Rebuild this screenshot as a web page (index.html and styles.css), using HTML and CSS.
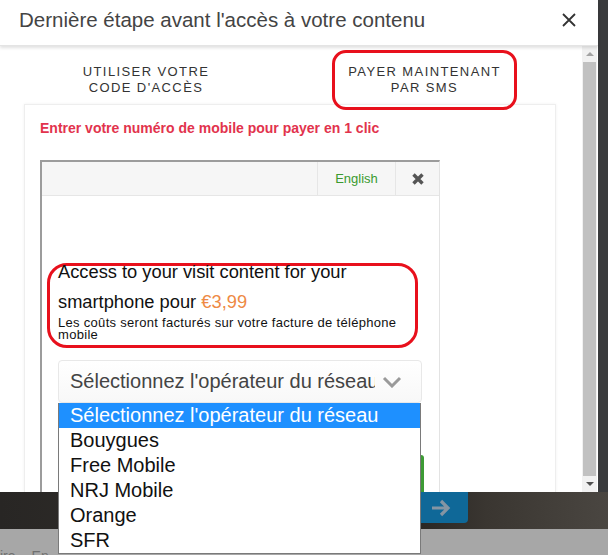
FILE: index.html
```html
<!DOCTYPE html>
<html>
<head>
    <title>Dernière étape</title>
    <meta charset="UTF-8">
    <link rel="stylesheet" href="styles.css">
</head>
<body>
    <div class="screen">
        <div class="modal">
            <div class="modal-header">
                <h2 class="modal-title">Dernière étape avant l'accès à votre contenu</h2>
                <svg class="modal-close" width="16" height="16" viewBox="0 0 16 16">
                    <path d="M2 2 L14 14 M14 2 L2 14" stroke="#333" stroke-width="1.8" fill="none"/>
                </svg>
            </div>

            <div class="modal-main">
                <div class="modal-scroll">
                    <div class="tabs">
                        <div class="tab">UTILISER VOTRE<br>CODE D'ACCÈS</div>
                        <div class="tab tab-active">PAYER MAINTENANT<br>PAR SMS</div>
                    </div>

                    <div class="card">
                        <p class="card-title">Entrer votre numéro de mobile pour payer en 1 clic</p>

                        <div class="frame">
                            <div class="frame-bar">
                                <span class="lang">English</span>
                                <span class="frame-close">
                                    <svg width="14" height="14" viewBox="0 0 14 14">
                                        <path d="M2.5 2.5 L11.5 11.5 M11.5 2.5 L2.5 11.5" stroke="#555" stroke-width="3.4" fill="none"/>
                                    </svg>
                                </span>
                            </div>
                            <div class="frame-body">
                                <div class="offer">
                                    <p class="offer-text">Access to your visit content for your smartphone pour <span class="price">€3,99</span></p>
                                    <p class="offer-note">Les coûts seront facturés sur votre facture de téléphone mobile</p>
                                </div>

                                <div class="operator-select">
                                    <div class="select-box">
                                        <span class="select-value">Sélectionnez l'opérateur du réseau</span>
                                        <svg class="chevron" width="20" height="12" viewBox="0 0 20 12">
                                            <path d="M2 2 L10 10 L18 2" stroke="#9a9a9a" stroke-width="3" fill="none"/>
                                        </svg>
                                    </div>
                                    <ul class="select-list">
                                        <li class="selected">Sélectionnez l'opérateur du réseau</li>
                                        <li>Bouygues</li>
                                        <li>Free Mobile</li>
                                        <li>NRJ Mobile</li>
                                        <li>Orange</li>
                                        <li>SFR</li>
                                    </ul>
                                </div>

                                <div class="pay-btn"></div>
                            </div>
                        </div>
                    </div>
                </div>

                <div class="scrollbar">
                    <span class="arrow-up"></span>
                    <div class="thumb"></div>
                    <span class="arrow-down"></span>
                </div>
            </div>
        </div>

        <div class="backdrop">
            <div class="next-btn">
                <svg width="20" height="18" viewBox="0 0 20 18">
                    <path d="M1 9 H17 M10 2 L17 9 L10 16" stroke="#8595a3" stroke-width="3.2" fill="none"/>
                </svg>
            </div>
        </div>
        <div class="footer-strip">
            <span>ire</span>
            <span>En</span>
        </div>
    </div>
</body>
</html>
```

FILE: styles.css
```css
* {
    box-sizing: border-box;
}

body {
    margin: 0;
    background-color: #2f2d2a;
    font-family: "Liberation Sans", Arial, sans-serif;
    overflow: hidden;
}

.screen {
    width: 608px;
    height: 555px;
    display: flex;
    flex-direction: column;
    background-color: #3a3b3d;
}

.modal {
    width: 598px;
    height: 492px;
    display: flex;
    flex-direction: column;
    background-color: #fff;
}

.modal-header {
    height: 46px;
    flex-shrink: 0;
    display: flex;
    align-items: center;
    justify-content: space-between;
    padding: 0 21px 6px 19px;
    box-shadow: 0 2px 3px rgba(0, 0, 0, 0.12);
    border-bottom: 1px solid #e4e4e4;
    position: relative;
    z-index: 2;
}

.modal-title {
    margin: 0;
    font-size: 20.5px;
    font-weight: normal;
    color: #444;
}

.modal-main {
    flex: 1;
    display: flex;
}

.modal-scroll {
    flex: 1;
    padding: 4px 26px 0 24px;
}

/* Tabs */
.tabs {
    display: flex;
    position: relative;
    z-index: 1;
    margin-bottom: -6px;
}

.tab {
    width: 244px;
    padding-top: 14px;
    text-align: center;
    font-size: 13px;
    line-height: 16px;
    letter-spacing: 1.4px;
    color: #333;
}

.tab-active {
    width: 185px;
    height: 60px;
    margin-left: 64px;
    padding-top: 0;
    display: flex;
    align-items: center;
    justify-content: center;
    border: 3px solid #e8101c;
    border-radius: 14px;
}

/* Card */
.card {
    height: 388px;
    border: 1px solid #eee;
    border-bottom: none;
    box-shadow: 0 0 3px rgba(0, 0, 0, 0.06);
    padding: 15px 15px 0 15px;
}

.card-title {
    margin: 0 0 24px 0;
    font-size: 14px;
    line-height: 16px;
    font-weight: bold;
    color: #e2334d;
}

/* Embedded payment frame */
.frame {
    width: 400px;
    height: 332px;
    border-top: 2px solid #9c9c9c;
    border-left: 2px solid #9c9c9c;
    border-right: 1px solid #e3e3e3;
}

.frame-bar {
    height: 34px;
    display: flex;
    justify-content: flex-end;
    background-color: #f6f6f6;
    border-bottom: 1px solid #e6e6e6;
}

.lang {
    width: 78px;
    display: flex;
    align-items: center;
    justify-content: center;
    border-left: 1px solid #e6e6e6;
    font-size: 13px;
    color: #3a9a2f;
}

.frame-close {
    width: 44px;
    display: flex;
    align-items: center;
    justify-content: center;
    border-left: 1px solid #e6e6e6;
}

.frame-body {
    padding: 67px 0 0 5px;
}

.offer {
    width: 371px;
    height: 85px;
    padding: 0 8px;
    border: 3px solid #e8101c;
    border-radius: 20px;
}

.offer-text {
    margin: -9px 0 0 0;
    font-size: 18.3px;
    line-height: 30px;
    color: #111;
}

.price {
    color: #ee8a45;
}

.offer-note {
    margin: 0;
    font-size: 13px;
    line-height: 12px;
    letter-spacing: 0.3px;
    color: #111;
}

/* Operator select */
.operator-select {
    position: relative;
    width: 364px;
    margin: 12px 0 0 11px;
}

.select-box {
    height: 43px;
    display: flex;
    align-items: center;
    justify-content: space-between;
    padding: 0 19px 0 11px;
    border: 1px solid #e8e8e8;
    border-radius: 4px;
    background: linear-gradient(#fff, #f8f8f8);
}

.select-value {
    width: 305px;
    overflow: hidden;
    white-space: nowrap;
    font-size: 20px;
    color: #444;
}

.select-list {
    position: absolute;
    top: 100%;
    left: 0;
    width: 363px;
    margin: 0;
    padding: 0;
    list-style: none;
    background-color: #fff;
    border: 1px solid #7a7a7a;
    border-top: none;
    z-index: 5;
}

.select-list li {
    height: 25px;
    line-height: 25px;
    padding-left: 11px;
    font-size: 20px;
    color: #111;
}

.select-list .selected {
    background-color: #1e90ff;
    color: #fff;
}

.pay-btn {
    width: 366px;
    height: 37px;
    margin: 52px 0 0 11px;
    background-color: #3d9b35;
    border-radius: 3px 3px 0 0;
}

/* Scrollbar */
.scrollbar {
    width: 15px;
    margin-right: 1px;
    display: flex;
    flex-direction: column;
    align-items: center;
    background-color: #f1f1f1;
}

.arrow-up,
.arrow-down {
    width: 0;
    height: 0;
    margin: 6px 0;
    border-left: 4px solid transparent;
    border-right: 4px solid transparent;
}

.arrow-up {
    border-bottom: 4px solid #a3a3a3;
}

.arrow-down {
    border-top: 4px solid #505050;
}

.thumb {
    width: 13px;
    flex: 1;
    background-color: #c1c1c1;
}

/* Page behind the modal */
.backdrop {
    height: 37px;
    flex-shrink: 0;
    background: linear-gradient(90deg, #282624 0%, #33302c 40%, #1f1d1b 62%, #3a3631 80%, #4a4641 100%);
}

.next-btn {
    width: 60px;
    height: 31px;
    margin-left: 408px;
    padding-left: 6px;
    display: flex;
    align-items: center;
    justify-content: center;
    background-color: #0f6898;
    border-radius: 0 0 4px 4px;
}

.footer-strip {
    flex: 1;
    display: flex;
    gap: 16px;
    padding-top: 19px;
    background-color: #a7a7a7;
    font-size: 14px;
    line-height: 16px;
    color: #707070;
}
```
